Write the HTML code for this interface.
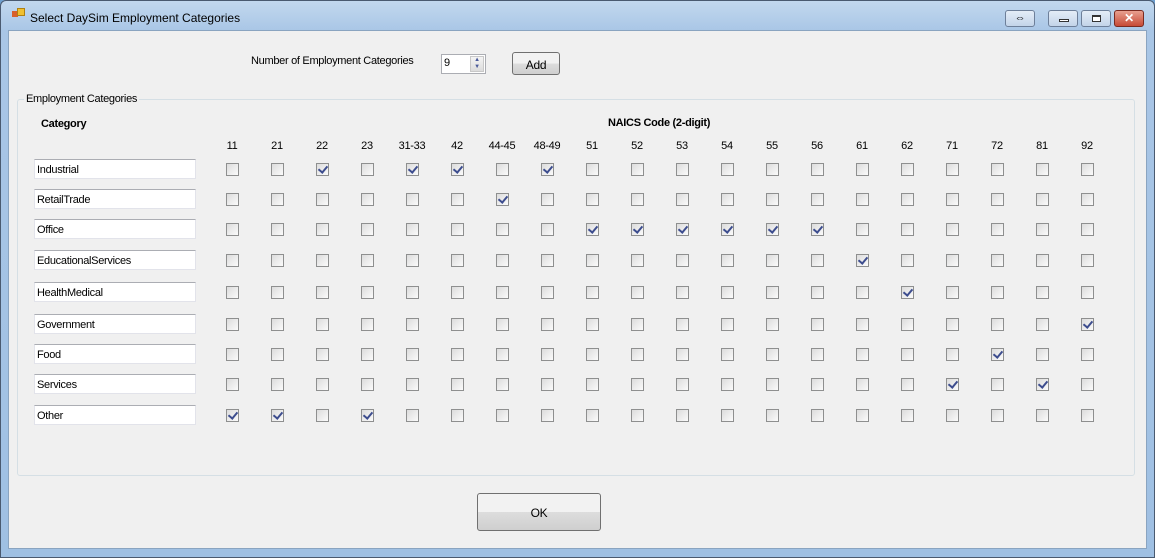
<!DOCTYPE html>
<html><head><style>
*{margin:0;padding:0;box-sizing:border-box}
body{width:1155px;height:558px;overflow:hidden;font-family:"Liberation Sans",sans-serif;font-size:11px;letter-spacing:-0.3px;color:#000;position:relative;background:#6fa0cf}
.frame{position:absolute;left:0;top:0;width:1155px;height:558px;background:linear-gradient(#c2d8ee,#a9c6e6 30px,#9fc0e3);border:1px solid #4a5a70;border-radius:6px 6px 0 0}
.client{position:absolute;left:8px;top:30px;width:1139px;height:519px;background:#f0f0f0;border:1px solid #8aa4c0}
.a{position:absolute;white-space:nowrap}
.tb{position:absolute;left:34px;width:162px;height:20px;background:#fff;border:1px solid #e2e3ea;border-top-color:#abadb3;padding:4px 0 0 2px;font-size:11px}
.cb{position:absolute;width:13px;height:13px;border:1px solid #8e8f8f;background:linear-gradient(135deg,#dcdcdc,#fbfbfb);}
.cb.c::after{content:"";position:absolute;left:3px;top:0px;width:4px;height:7px;border:solid #3d4d8e;border-width:0 2px 2px 0;transform:rotate(40deg)}
.btn{position:absolute;border:1px solid #707070;border-radius:3px;background:linear-gradient(#f2f2f2 50%,#dddddd 50%,#cfcfcf);text-align:center}
.wb{position:absolute;top:10px;height:17px;border:1px solid #6d7f99;border-radius:3px;background:linear-gradient(#e4edf7,#c3d4e9)}
</style></head><body>
<div class="frame"></div>
<div class="a" style="left:12px;top:11px;width:6px;height:6px;background:#d8602a"></div>
<div class="a" style="left:17px;top:8px;width:8px;height:8px;background:#f0c030;border:1px solid #b08010"></div>
<div class="a" style="left:30px;top:11px;font-size:12px;letter-spacing:0;color:#000">Select DaySim Employment Categories</div>
<div class="wb" style="left:1005px;width:30px;text-align:center;font-size:11px;line-height:14px">⇔</div>
<div class="wb" style="left:1048px;width:30px"><div style="position:absolute;left:10px;top:8px;width:10px;height:3px;border:1px solid #333;background:#fff"></div></div>
<div class="wb" style="left:1081px;width:30px"><div style="position:absolute;left:10px;top:4px;width:9px;height:7px;border:1px solid #333;border-top-width:2px;background:#fff"></div></div>
<div class="wb" style="left:1114px;width:30px;background:linear-gradient(#e8a090,#c74a36);border-color:#7a2a20;color:#fff;text-align:center;font-weight:bold;font-size:12px;line-height:15px">✕</div>
<div class="client"></div>
<div class="a" style="left:251px;top:55px">Number of Employment Categories</div>
<div class="a" style="left:441px;top:54px;width:45px;height:20px;background:#fff;border:1px solid #abadb3;padding:2px 0 0 2px">9
<div style="position:absolute;right:1px;top:1px;width:14px;height:16px;background:linear-gradient(#f4f4f4,#dcdcdc);border:1px solid #c8c8c8;font-size:6px;color:#4a5a9a;text-align:center;line-height:7px">▲<br>▼</div></div>
<div class="btn" style="left:512px;top:52px;width:48px;height:23px;padding-top:5px;font-size:12px">Add</div>
<div class="a" style="left:17px;top:99px;width:1118px;height:377px;border:1px solid #d5dfe5;border-radius:3px"></div>
<div class="a" style="left:24px;top:93px;background:#f0f0f0;padding:0 2px">Employment Categories</div>
<div class="a" style="left:41px;top:118px;font-weight:bold;font-size:11px">Category</div>
<div class="a" style="left:608px;top:117px;font-weight:bold;font-size:11px">NAICS Code (2-digit)</div>
<div id="g"></div>
<div class="btn" style="left:477px;top:493px;width:124px;height:38px;padding-top:12px;font-size:12px">OK</div>
<script>
var codes=["11","21","22","23","31-33","42","44-45","48-49","51","52","53","54","55","56","61","62","71","72","81","92"];
var rows=[["Industrial",169,[2,4,5,7]],["RetailTrade",199,[6]],["Office",229,[8,9,10,11,12,13]],["EducationalServices",260,[14]],["HealthMedical",292,[15]],["Government",324,[19]],["Food",354,[17]],["Services",384,[16,18]],["Other",415,[0,1,3]]];
var h="";
codes.forEach(function(c,i){var x=232+45*i;h+='<div class="a" style="left:'+(x-25)+'px;top:140px;width:50px;text-align:center">'+c+'</div>';});
rows.forEach(function(r){h+='<div class="tb" style="top:'+(r[1]-10)+'px">'+r[0]+'</div>';
codes.forEach(function(c,i){var x=232+45*i;h+='<div class="cb'+(r[2].indexOf(i)>=0?' c':'')+'" style="left:'+(x-6)+'px;top:'+(r[1]-6)+'px"></div>';});});
document.getElementById("g").innerHTML=h;
</script>
</body></html>
